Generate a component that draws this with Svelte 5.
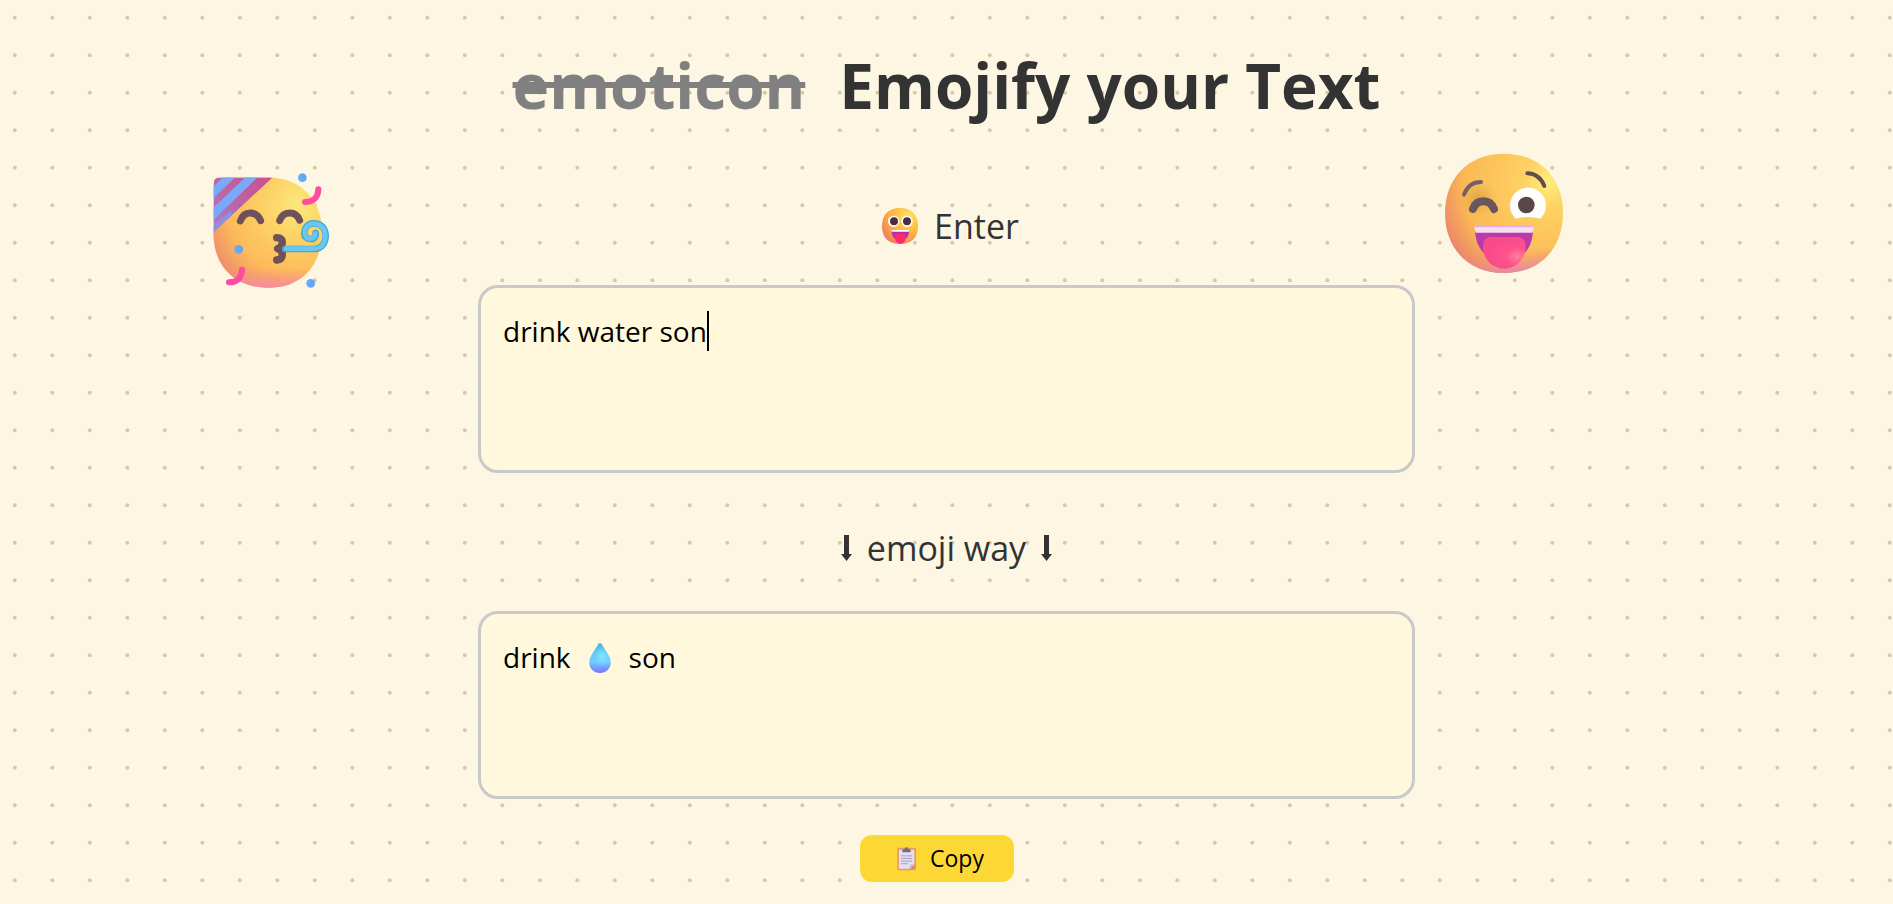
<script>
  let text = $state('drink water son');
  const words = $derived(text.split(' '));

  function copy() {
    navigator.clipboard?.writeText(text.replaceAll('water', '💧'));
  }
</script>

<main>
  <h1><s>emoticon</s> <span>Emojify your Text</span></h1>

  <label class="caption enter" for="source">
    <svg class="face" viewBox="66 54 108 108" aria-hidden="true">
      <defs>
        <radialGradient id="zany" cx="72%" cy="25%" r="85%">
          <stop offset="0" stop-color="#ffe564" />
          <stop offset=".5" stop-color="#feb83e" />
          <stop offset="1" stop-color="#ee7f63" />
        </radialGradient>
      </defs>
      <path fill="url(#zany)" d="M120 54c34 0 54 20 54 54s-18 54-54 54-54-20-54-54 20-54 54-54z" />
      <circle cx="101" cy="94" r="17" fill="#fff" />
      <circle cx="141" cy="94" r="17" fill="#fff" />
      <circle cx="102" cy="94" r="12" fill="#4b2e3d" />
      <circle cx="141" cy="94" r="12" fill="#4b2e3d" />
      <path fill="#b32da5" d="M94 120h54c-1 18-9 31-27 31s-26-13-27-31z" />
      <path fill="#fff" d="M94 120h54l-1 5H95z" />
      <path fill="#fb2b70" d="M102 134q19-8 37 0l-2 12c-2 10-8 15-16 15s-14-5-16-15z" />
    </svg>
    <span>Enter</span>
  </label>

  <div class="field">
    <textarea id="source" class="box" spellcheck="false" bind:value={text}></textarea>
    <span class="caret"></span>
  </div>

  <label class="caption way" for="result">
    {@render arrow()}
    <span>emoji way</span>
    {@render arrow()}
  </label>

  <output id="result" class="box">
    {#each words as word}
      {#if word === 'water'}
        <svg class="drop" viewBox="355 128 66 92" role="img" aria-label="water">
          <defs>
            <linearGradient id="drop" x1="0" y1="0" x2="0" y2="1">
              <stop offset="0" stop-color="#45b5dd" />
              <stop offset=".35" stop-color="#62caf6" />
              <stop offset=".62" stop-color="#70cfff" />
              <stop offset="1" stop-color="#7b72ff" />
            </linearGradient>
            <radialGradient id="shine" cx="60%" cy="45%" r="35%">
              <stop offset="0" stop-color="#83e4ff" />
              <stop offset="1" stop-color="#83e4ff" stop-opacity="0" />
            </radialGradient>
          </defs>
          <path fill="url(#drop)" d="M388 128q4 0 7 6c8 16 26 34 26 54 0 19-14 32-33 32s-33-13-33-32c0-20 18-38 26-54q3-6 7-6z" />
          <path fill="url(#shine)" d="M388 128q4 0 7 6c8 16 26 34 26 54 0 19-14 32-33 32s-33-13-33-32c0-20 18-38 26-54q3-6 7-6z" />
        </svg>
      {:else}
        <span>{word}</span>
      {/if}
    {/each}
  </output>

  <button type="button" onclick={copy}>
    <svg class="board" viewBox="170 83 58 71" aria-hidden="true">
      <rect x="171" y="84" width="57" height="69" rx="3" fill="#e39a68" />
      <path fill="#e6dff2" d="M176 90h47v45l-14 13h-33z" />
      <path fill="#d28a66" d="M223 135l-14 13h14z" />
      <path fill="#c9b9d8" d="M209 148v-11q0-2 2-2h12z" />
      <path fill="#796b80" d="M186 98v-5q0-4 5-4h2q0-6 6-6t6 6h2q5 0 5 4v5z" />
      <path stroke="#a79bb8" stroke-width="3" d="M182 109h34M182 117h34M182 125h34M182 133h22" />
    </svg>
    <span>Copy</span>
  </button>

  <svg class="sticker party" viewBox="0 0 420 420" aria-hidden="true">
    <defs>
      <radialGradient id="p1" cx="78%" cy="25%" r="95%">
        <stop offset="0" stop-color="#fbe873" />
        <stop offset=".3" stop-color="#fcd15e" />
        <stop offset=".68" stop-color="#fdb64f" />
        <stop offset="1" stop-color="#ea7a68" />
      </radialGradient>
      <linearGradient id="p2" x1="0" y1="0" x2="0" y2="1">
        <stop offset=".82" stop-color="#f78c86" stop-opacity="0" />
        <stop offset="1" stop-color="#f78398" />
      </linearGradient>
      <linearGradient id="p3" x1="1" y1="0" x2="0" y2="1">
        <stop offset="0" stop-color="#cf3f8b" />
        <stop offset=".5" stop-color="#b55a9f" />
        <stop offset="1" stop-color="#a777c9" />
      </linearGradient>
      <linearGradient id="p4" x1="0" y1="0" x2="1" y2="0">
        <stop offset="0" stop-color="#5aa9ff" />
        <stop offset="1" stop-color="#559df5" />
      </linearGradient>
      <clipPath id="hat"><path d="M40 218V74q0-22 22-22h157z" /></clipPath>
    </defs>
    <path fill="url(#p1)" d="M40 217L216 53c92 4 150 73 150 160 0 105-62 170-160 170C101 383 40 318 40 217z" />
    <path fill="url(#p2)" d="M40 217L216 53c92 4 150 73 150 160 0 105-62 170-160 170C101 383 40 318 40 217z" />
    <g clip-path="url(#hat)">
      <path fill="url(#p3)" d="M40 218V52h179z" />
      <path fill="#71a4fb" d="M68 52h38L40 115V80zM136 52h37L40 180v-36z" />
      <path fill="#8489e5" d="M40 199l54-50v19l-54 50z" />
    </g>
    <g fill="none" stroke="#64454f" stroke-width="21" stroke-linecap="round" stroke-linejoin="round">
      <path d="M121 183q8-24 30-24t31 23M239 182q8-23 30-23t30 22" />
      <path stroke-width="22" d="M230 233q17 0 17 15-1 14-14 18 14 5 14 18 0 15-17 16" />
    </g>
    <path fill="#64454f" d="M222 266q0-10 16-11l18 11-18 11q-16-1-16-11z" />
    <path fill="none" stroke="#2da2da" stroke-width="20" d="M256 267h87c22 0 34-19 34-39 0-26-17-38-36-38-20 0-28 16-28 28 0 13 9 20 20 19 11 0 16-8 14-18" stroke-linecap="round" />
    <path fill="none" stroke="#61c4ee" stroke-width="14" d="M258 266h85c22 0 33-18 33-38 0-25-17-37-35-37-20 0-27 15-27 27 0 13 9 19 19 18 10 0 14-7 13-16" stroke-linecap="round" />
    <path fill="none" stroke="#ff3d9b" stroke-width="18" stroke-linecap="round" d="M315 126c24 0 39-13 40-38M87 367c24 0 38-14 39-38" />
    <circle cx="307" cy="53" r="13" fill="url(#p4)" />
    <circle cx="116" cy="268" r="13" fill="url(#p4)" />
    <circle cx="332" cy="370" r="13" fill="url(#p4)" />
  </svg>

  <svg class="sticker wink" viewBox="0 0 450 435" aria-hidden="true">
    <defs>
      <radialGradient id="w1" cx="88%" cy="24%" r="98%">
        <stop offset="0" stop-color="#ffee78" />
        <stop offset=".22" stop-color="#ffcf5a" />
        <stop offset=".74" stop-color="#fbb449" />
        <stop offset="1" stop-color="#ea7c63" />
      </radialGradient>
      <linearGradient id="w2" x1=".4" y1="0" x2=".5" y2="1">
        <stop offset=".82" stop-color="#ee8575" stop-opacity="0" />
        <stop offset="1" stop-color="#e77fa5" />
      </linearGradient>
      <radialGradient id="w3" cx="50%" cy="50%" r="50%">
        <stop offset="0" stop-color="#c99130" stop-opacity=".65" />
        <stop offset="1" stop-color="#d9a13d" stop-opacity="0" />
      </radialGradient>
      <radialGradient id="w4" cx="80%" cy="62%" r="65%">
        <stop offset="0" stop-color="#ff7896" />
        <stop offset=".4" stop-color="#ff4687" />
        <stop offset="1" stop-color="#f93f82" />
      </radialGradient>
    </defs>
    <path fill="url(#w1)" d="M222 41c107 0 177 73 177 178 0 106-68 180-177 180S45 325 45 219C45 114 115 41 222 41z" />
    <path fill="url(#w2)" d="M222 41c107 0 177 73 177 178 0 106-68 180-177 180S45 325 45 219C45 114 115 41 222 41z" />
    <ellipse cx="145" cy="178" rx="58" ry="54" fill="url(#w3)" />
    <g fill="none" stroke="#5f4a52" stroke-width="12" stroke-linecap="round">
      <path stroke="#6b5560" d="M102 164q14-38 51-38" />
      <path stroke="#55423f" d="M292 100q36 1 51 38" />
      <path stroke-width="24" d="M129 207q8-23 31-23t32 23" />
    </g>
    <path fill="#fff" d="M257 236a54 54 0 1 1 74 0q-36-10-74 0z" />
    <circle cx="289" cy="195" r="25" fill="#4e3a40" />
    <path fill="#b52ba7" d="M135 274h174c-4 57-35 88-86 88s-84-31-88-88z" />
    <path fill="#f7def4" d="M132 258h180l-4 20H137z" />
    <path fill="#e9a4e5" d="M132 258h180l-1 4H133z" />
    <path fill="url(#w4)" d="M159 317c2-35 35-26 64-26s64-8 64 26c0 40-28 69-64 69s-66-29-64-69z" />
  </svg>
</main>

{#snippet arrow()}
  <svg class="arrow" viewBox="0 0 11 26" aria-hidden="true">
    <path fill="currentColor" d="M3 0h5v19h3l-5.500 7L0 19h3z" />
  </svg>
{/snippet}

<style>
  :global(body) {
    margin: 0;
    background-color: #fdf5e2;
    background-color: #fdf6e3;
    background-image: url("data:image/svg+xml,%3Csvg xmlns='http://www.w3.org/2000/svg' width='75' height='75'%3E%3Cg fill='%23d9c8a8'%3E%3Ccircle cx='14.800' cy='17.800' r='2'/%3E%3Ccircle cx='52.300' cy='17.800' r='2'/%3E%3Ccircle cx='14.800' cy='55.300' r='2'/%3E%3Ccircle cx='52.300' cy='55.300' r='2'/%3E%3C/g%3E%3C/svg%3E");
    color: #333;
    font-family: "Segoe UI", "Open Sans", sans-serif;
  }

  main {
    position: relative;
    display: flex;
    flex-direction: column;
    align-items: center;
    padding: 40px 20px 20px;
  }

  h1 {
    display: flex;
    flex-wrap: wrap;
    justify-content: center;
    gap: 0 34px;
    margin: 0;
    font-size: 62px;
    line-height: 90px;
  }

  s {
    color: gray;
    text-decoration: underline;
    text-decoration-skip-ink: none;
    text-decoration-thickness: 6px;
    text-underline-offset: -27px;
  }

  .caption {
    display: flex;
    align-items: center;
    gap: 16px;
    margin: 72px 0 35px;
    font-size: 34px;
    line-height: 48px;
  }

  .enter {
    padding-left: 8px;
  }

  .face {
    width: 36px;
    height: 36px;
  }

  .way {
    gap: 15px;
    margin: 51px 0 39px;
  }

  .arrow {
    width: 11px;
    height: 26px;
  }

  .field {
    position: relative;
    display: flex;
    justify-content: center;
    width: 100%;
  }

  .box {
    box-sizing: border-box;
    width: 100%;
    max-width: 937px;
    height: 188px;
    padding: 23px 22px;
    border: 3px solid #c9c9c9;
    border-radius: 20px;
    background: #fff8dc;
    color: #000;
    font: inherit;
    font-size: 28px;
    line-height: 40px;
  }

  textarea {
    display: block;
    margin: 0;
    resize: none;
    outline: none;
    caret-color: transparent;
  }

  .caret {
    position: absolute;
    top: 26px;
    left: calc(50% - 240px);
    width: 2px;
    height: 40px;
    background: #000;
  }

  output {
    display: flex;
    align-items: flex-start;
    gap: 18px;
  }

  .drop {
    width: 22px;
    height: 30px;
    margin-top: 6px;
  }

  button {
    display: flex;
    align-items: center;
    gap: 14px;
    margin: 36px 19px 0 0;
    padding: 0 30px 0 37px;
    border: 0;
    border-radius: 12px;
    background: #fdd835;
    color: #000;
    font: inherit;
    font-size: 23px;
    line-height: 47px;
    cursor: pointer;
  }

  .board {
    width: 19px;
    height: 24px;
  }

  .sticker {
    position: absolute;
    opacity: 0.93;
    pointer-events: none;
  }

  .party {
    top: 160px;
    left: 200px;
    width: 140px;
    height: 140px;
  }

  .wink {
    top: 140px;
    right: 313px;
    width: 150px;
    height: 145px;
  }
</style>
